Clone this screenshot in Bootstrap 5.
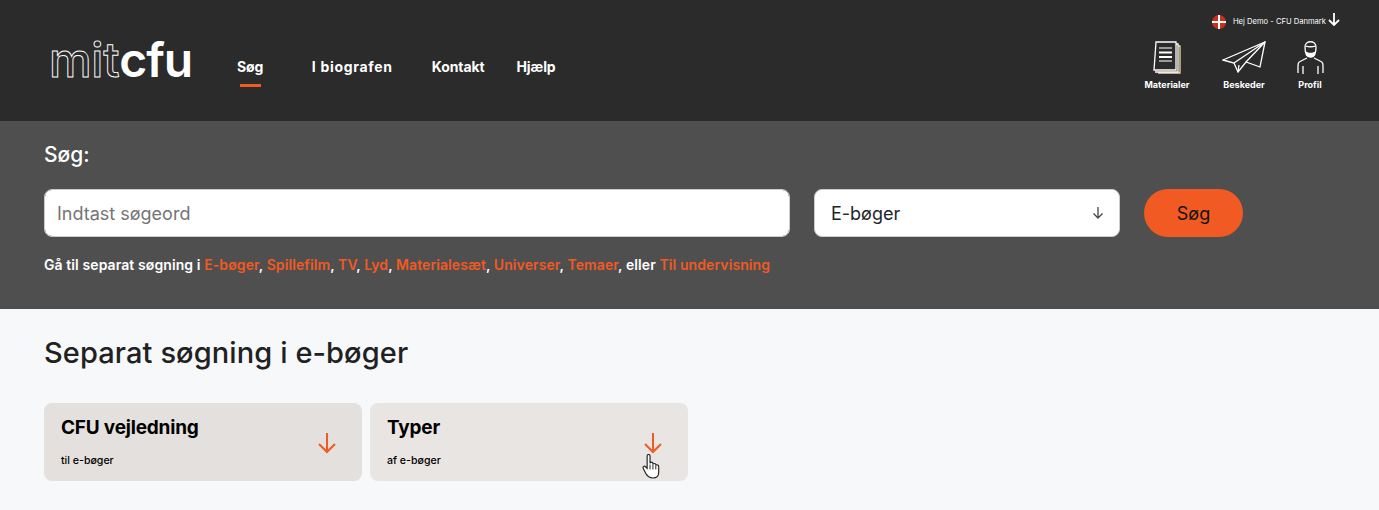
<!DOCTYPE html>
<html lang="da">
<head>
  <meta charset="UTF-8" />
  <meta name="viewport" content="width=device-width, initial-scale=1" />
  <title>mitCFU</title>
  <link href="https://cdn.jsdelivr.net/npm/bootstrap@5.3.0/dist/css/bootstrap.min.css" rel="stylesheet" />
  <style>
    body {
      font-family: Inter, "Liberation Sans", sans-serif;
      background: #f7f8fa;
      color: #212121;
      overflow: hidden;
    }
    .topbar { background: #2b2b2b; height: 121px; padding: 0 44px 0 49px; }
    .logo { font-size: 48px; line-height: 1; color: #fff; width: 188px; margin-top: 36px; white-space: nowrap; }
    .logo-thin { color: #2b2b2b; -webkit-text-stroke: .9px #fff; font-weight: 500; letter-spacing: -.3px; }
    .logo-bold { font-weight: 600; letter-spacing: -1px; }
    .mainnav { font-size: 14px; font-weight: 700; margin-top: 56px; }
    .mainnav a { color: #fff; text-decoration: none; display: block; letter-spacing: -.1px; }
    .mainnav a.on::after { content: ""; display: block; width: 21px; height: 3px; margin: 7px auto 0; background: #f15a22; }
    .mainnav a.wide { letter-spacing: .7px; margin: 0 39px 0 48.500px; }
    .mainnav a.last { margin-left: 32px; }
    .hello { font-size: 7.600px; color: #fff; height: 41px; padding-top: 15px; margin-right: -5px; }
    .hello span { margin-top: 1px; }
    .flagmark { margin-right: 7px; }
    .hello-arrow { margin: -2px 0 0 2px; }
    .tool { font-size: 9px; font-weight: 700; color: #fff; text-decoration: none; text-align: center; display: block; width: 50px; }
    .tool svg { display: block; margin: 0 auto 4px; }
    .tool-first { margin-right: 27px; }
    .tool-second { margin-right: 16px; }
    .searchband { background: #4f4f4f; height: 188px; padding: 22px 44px 0; color: #fff; }
    .searchband h2 { font-size: 21px; font-weight: 500; line-height: 24px; margin-bottom: 22px; }
    .field-q, .field-type { height: 48px; border-radius: 8px; font-size: 18px; border: 1px solid #ccc; }
    .field-q { width: 746px; color: #333; padding-left: 12px; }
    .field-q::placeholder { color: #757575; }
    .field-type { width: 306px; padding-left: 16px; background-size: 14px; background-position: right 14px center;
      background-image: url("data:image/svg+xml,%3Csvg xmlns='http://www.w3.org/2000/svg' viewBox='0 0 14 14'%3E%3Cpath d='M7 1v11M2.500 7.500 7 12l4.500-4.500' fill='none' stroke='%23444' stroke-width='1.300'/%3E%3C/svg%3E"); }
    .btn-go { width: 99px; height: 48px; border-radius: 24px; background: #f15a22; color: #111; font-size: 18px; border: 0; }
    .btn-go:hover { background: #f15a22; color: #111; }
    .quicklinks { font-size: 14px; font-weight: 600; margin-top: 17px; letter-spacing: .09px; }
    .quicklinks a { color: #f15a22; text-decoration: none; }
    .content { padding: 26px 44px 0; }
    .content h1 { font-size: 29px; font-weight: 500; line-height: 36px; margin-bottom: 32px; letter-spacing: .1px; }
    .tile { width: 318px; height: 78px; border-radius: 8px; padding: 13px 17px; color: #000; text-decoration: none; display: flex; justify-content: space-between; }
    .tile-a { background: #e4e0dd; }
    .tile-b { background: #e9e5e2; position: relative; }
    .tile h3 { font-size: 19px; font-weight: 700; line-height: 24px; margin: 0 0 13px; letter-spacing: -.2px; }
    .tile small { font-size: 10.600px; font-weight: 500; display: block; }
    .tile-arrow { margin: 16px 8px 0 0; }
    .handcursor { position: absolute; left: 272px; top: 51px; }
  </style>
</head>
<body>

  <!-- Top -->
  <header class="topbar d-flex align-items-start">
    <a class="logo text-decoration-none" href="#"><span class="logo-thin">mit</span><span class="logo-bold">cfu</span></a>
    <nav class="mainnav d-flex">
      <a class="on" href="#">Søg</a>
      <a class="wide" href="#">I biografen</a>
      <a href="#">Kontakt</a>
      <a class="last" href="#">Hjælp</a>
    </nav>
    <div class="ms-auto">
      <div class="hello d-flex align-items-start justify-content-end">
        <svg class="flagmark" width="14" height="14" viewBox="0 0 14 14"><circle cx="7" cy="7" r="7" fill="#c8301e"/><path d="M0 7h14M7 0v14" stroke="#fff" stroke-width="2"/></svg>
        <span>Hej Demo - CFU Danmark</span>
        <svg class="hello-arrow" width="12" height="13" viewBox="0 0 12 13" fill="none" stroke="#fff" stroke-width="1.800"><path d="M6 0v12M1 7l5 5 5-5"/></svg>
      </div>
      <div class="d-flex">
        <a class="tool tool-first" href="#">
          <svg width="28" height="33" viewBox="0 0 28 33" fill="none" stroke="#fff" stroke-width="1.300"><path d="M25 5h2v27H5" stroke="#f1d9a0"/><path d="M23 3h2v28H2"/><path d="M3 1h20v28H1z" fill="#2b2b2b"/><path d="M6 7h13M6 20h13" stroke="#999" stroke-width="1.800"/><path d="M6 11.500h13M6 16h13" stroke-width="1.800"/></svg>
          Materialer
        </a>
        <a class="tool tool-second" href="#">
          <svg width="44" height="33" viewBox="0 0 44 33" fill="none" stroke="#fff" stroke-width="1.300"><path d="M1 19 43 1 38 26 24 21 16 31 12 22z"/><path d="M43 1 12 22M43 1 24 21M16 31l1-7"/></svg>
          Beskeder
        </a>
        <a class="tool" href="#">
          <svg width="27" height="33" viewBox="0 0 27 33" fill="none" stroke="#fff" stroke-width="1.300"><path d="M8 6c0-7 11-7 11 0 0 5-1 10-5.500 10S8 11 8 6z"/><path d="M8.500 5c3 1 7 1 10 0M9.500 11.500c2 1 6 1 8 0v2.500c-2 2-6 2-8 0z" fill="#fff"/><path d="M10 17l-6 3c-3 1-3 3-3 6v6M17 17l6 3c3 1 3 3 3 6v6M6 33v-8M21 33v-8"/></svg>
          Profil
        </a>
      </div>
    </div>
  </header>

  <!-- Search -->
  <section class="searchband">
    <h2>Søg:</h2>
    <form class="d-flex">
      <input class="form-control field-q me-4" type="text" placeholder="Indtast søgeord" />
      <select class="form-select field-type me-4"><option>E-bøger</option></select>
      <button class="btn btn-go" type="button">Søg</button>
    </form>
    <p class="quicklinks">Gå til separat søgning i <a href="#">E-bøger</a>, <a href="#">Spillefilm</a>, <a href="#">TV</a>, <a href="#">Lyd</a>, <a href="#">Materialesæt</a>, <a href="#">Universer</a>, <a href="#">Temaer</a>, eller <a href="#">Til undervisning</a></p>
  </section>

  <!-- Tiles -->
  <main class="content">
    <h1>Separat søgning i e-bøger</h1>
    <div class="d-flex gap-2">
      <a class="tile tile-a" href="#">
        <div><h3>CFU vejledning</h3><small>til e-bøger</small></div>
        <svg class="tile-arrow" width="20" height="22" viewBox="0 0 20 22" fill="none" stroke="#f15a22" stroke-width="2"><path d="M10 1v19M2 12l8 8 8-8"/></svg>
      </a>
      <a class="tile tile-b" href="#">
        <div><h3>Typer</h3><small>af e-bøger</small></div>
        <svg class="tile-arrow" width="20" height="22" viewBox="0 0 20 22" fill="none" stroke="#f15a22" stroke-width="2"><path d="M10 1v19M2 12l8 8 8-8"/></svg>
        <svg class="handcursor" width="18" height="25" viewBox="0 0 18 26"><path d="M5 2c0-2 3-2 3 0v8c0-2 3-2 3 0v1c0-1.500 3-1.500 3 0v1c0-1 3-1 3 1v6c0 4-2 6-6 6-3 0-5-1-7-4L1 15c-1-2 1-3 2-2l2 2z" fill="#fff" stroke="#222" stroke-width="1.200"/><path d="M8 11v5M11 11v5M14 12v4" stroke="#222"/></svg>
      </a>
    </div>
  </main>

</body>
</html>
